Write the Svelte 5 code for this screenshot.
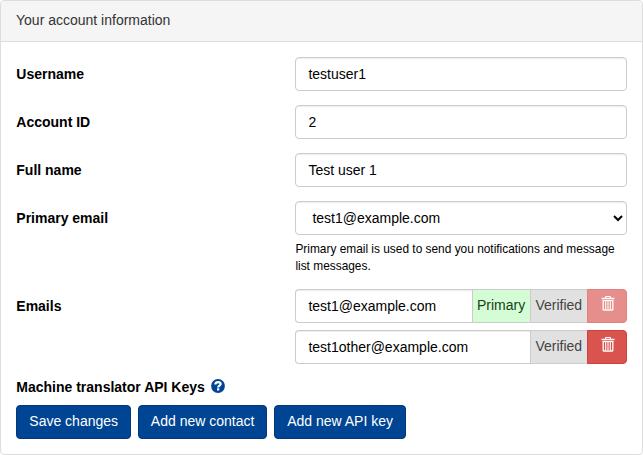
<script>
  const fields = [
    { id: 'username', label: 'Username', value: 'testuser1' },
    { id: 'account-id', label: 'Account ID', value: '2' },
    { id: 'full-name', label: 'Full name', value: 'Test user 1' }
  ];
  const emails = [
    { address: 'test1@example.com', primary: true },
    { address: 'test1other@example.com', primary: false }
  ];
  const actions = ['Save changes', 'Add new contact', 'Add new API key'];
</script>

<section class="panel">
  <header>Your account information</header>
  <div class="body">
    {#each fields as field}
      <div class="row">
        <label for={field.id}>{field.label}</label>
        <div class="control"><input id={field.id} value={field.value} /></div>
      </div>
    {/each}

    <div class="row">
      <label for="primary-email">Primary email</label>
      <div class="control">
        <select id="primary-email"><option>test1@example.com</option></select>
        <p>Primary email is used to send you notifications and message list messages.</p>
      </div>
    </div>

    <div class="row emails-row">
      <span class="label">Emails</span>
      <div class="control emails">
        {#each emails as email}
          <div class="group">
            <input value={email.address} aria-label="Email" />
            {#if email.primary}<span class="addon primary">Primary</span>{/if}
            <span class="addon">Verified</span>
            <button class="delete" disabled={email.primary} aria-label="Delete">
              <svg width="14" height="16" viewBox="0 0 14 16" fill="none" stroke="#fff">
                <path d="M4.5 3V1.5h5V3" />
                <path d="M0.5 3.5h13" stroke-width="1.4" />
                <path d="M1.5 5.5h11" />
                <path d="M2.2 5.5v9q0 .5.5.5h8.6q.5 0 .5-.5v-9" stroke-width="1.3" />
                <path d="M4.7 5.5V14M7 5.5V14M9.3 5.5V14" stroke-width="1.1" />
              </svg>
            </button>
          </div>
        {/each}
      </div>
    </div>

    <div class="keys">
      <span>Machine translator API Keys</span>
      <svg width="14" height="14" viewBox="0 0 14 14">
        <circle cx="7" cy="7" r="6.9" fill="#004494" />
        <path d="M4.4 5.4C4.4 3.8 5.5 3.2 7.1 3.2S9.6 4 9.6 5.1C9.6 6.7 7.2 6.6 7.2 8.4" fill="none" stroke="#fff" stroke-width="2.3" />
        <path d="M6 9.3h2.3v2.2H6z" fill="#fff" />
      </svg>
    </div>

    <div class="actions">
      {#each actions as action}<button class="action">{action}</button>{/each}
    </div>
  </div>
</section>

<style>
  * { box-sizing: border-box; }
  .panel {
    height: 455px;
    border: 1px solid #ddd;
    border-radius: 4px;
    background: #fff;
    color: #000;
    font: 14px/20px "Liberation Sans", Arial, sans-serif;
    overflow: hidden;
  }
  header {
    height: 41px;
    padding: 9px 15px;
    border-bottom: 1px solid #ddd;
    background: #f5f5f5;
    color: #333;
  }
  .body { padding: 15px 15px 15px 15.3px; }
  .row { display: flex; margin-bottom: 14px; }
  label, .label { width: 279.1px; padding-top: 7px; font-weight: bold; }
  .control { flex: 1; min-width: 0; }
  input, select {
    display: block;
    width: 100%;
    height: 34px;
    margin: 0;
    padding: 6px 12px;
    border: 1px solid #ccc;
    border-radius: 4px;
    background: #fff;
    color: #000;
    font: inherit;
    box-shadow: inset 0 1px 1px rgba(0, 0, 0, .075);
    outline: none;
  }
  p { margin: 6px 0 0; font-size: 11.9px; line-height: 17px; }
  .emails-row { margin-bottom: 13px; }
  .emails { display: flex; flex-direction: column; gap: 7px; }
  .group { display: flex; height: 34px; }
  .group input { flex: 1; min-width: 0; border-right: 0; border-radius: 4px 0 0 4px; }
  .addon {
    width: 57px;
    padding: 5px 0 0 4.4px;
    border: 1px solid #ccc;
    border-right: 0;
    background: #e1e1e1;
    color: #444;
    white-space: nowrap;
  }
  .addon.primary { width: 58px; padding-left: 4px; background: #d5fdd5; color: #153f15; }
  .delete {
    display: flex;
    justify-content: center;
    align-items: flex-start;
    width: 40px;
    height: 34px;
    padding: 5px 0 0 1px;
    border: 1px solid #d43f3a;
    border-radius: 0 4px 4px 0;
    background: #d9534f;
  }
  .delete:disabled { opacity: .65; }
  .keys { display: flex; align-items: center; gap: 6px; height: 20px; font-weight: bold; }
  .keys svg { position: relative; top: -1px; }
  .actions { display: flex; gap: 6.8px; margin-top: 8px; }
  .action {
    height: 34px;
    padding: 5px 12px 7px;
    border: 1px solid #00387b;
    border-radius: 4px;
    background: #004494;
    color: #fff;
    font: inherit;
  }
</style>
